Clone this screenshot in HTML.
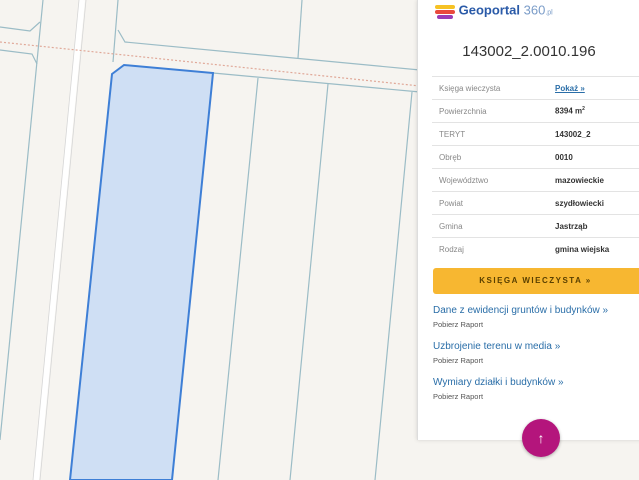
<!DOCTYPE html>
<html><head><meta charset="utf-8"><style>
body{margin:0;width:639px;height:480px;overflow:hidden;background:#f6f4f0;font-family:"Liberation Sans",sans-serif;position:relative}
svg{position:absolute;left:0;top:0}
.panel{position:absolute;left:417px;top:0;width:230px;height:440px;background:#fff;border-left:1px solid #ddd;box-shadow:0 0 4px rgba(0,0,0,.15)}
.logo{position:absolute;left:17px;top:2px;font-size:13px;color:#2a5aa8;font-weight:bold}
.logo i{font-style:normal;font-weight:normal;color:#7a9cc8}
.title{position:absolute;left:0;width:222px;top:43px;text-align:center;font-size:15px;color:#333}
table{position:absolute;left:14px;top:76px;width:210px;border-collapse:collapse;font-size:8px}
td{height:22px;border-top:1px solid #e3e3e3;color:#888;padding:0 0 0 7px;width:110px}
td+td{color:#333;font-weight:bold;padding-left:6px;width:auto}
.btn{position:absolute;left:15px;top:268px;width:215px;height:26px;background:#f7b731;border-radius:3px;color:#5a4000;font-size:8px;font-weight:bold;letter-spacing:1.5px;line-height:26px;text-align:center;padding-right:10px;box-sizing:border-box}
.l{position:absolute;left:15px;font-size:10px;color:#2a6ea8}
.s{position:absolute;left:15px;font-size:7.5px;color:#555}
.fab{position:absolute;left:522px;top:419px;width:38px;height:38px;border-radius:50%;background:#b4157c;color:#fff;text-align:center;line-height:38px;font-size:14px;box-shadow:0 1px 3px rgba(0,0,0,.3)}
</style></head><body>
<svg width="639" height="480" fill="none" stroke="#9bbcc6" stroke-width="1.2">
<path d="M82 0 L36 480" stroke="#fff" stroke-width="6"/>
<path d="M79 0 L33 480M86 0L40 480" stroke="#d6d6d6" stroke-width=".8"/>
<path d="M43 0 L0 440"/>
<path d="M118 0 L113 62"/>
<path d="M0 27 L30 31 L40 22M0 50 L32 54 L37 64"/>
<path d="M118 30 L125 42 L420 70"/>
<path d="M213 73 L420 92"/>
<path d="M302 0 L298 58"/>
<path d="M258 78 L218 480M328 84 L290 480M412 92 L375 480"/>
<path d="M0 42 L420 86" stroke="#e0a898" stroke-dasharray="2 2"/>
<path d="M112 74 L124 65 L213 73 L172 480 L70 480 Z" fill="#cfdff4" stroke="#3e7fd6" stroke-width="2"/>
</svg>
<div class="panel">
<div class="logo"><svg width="20" height="18" style="position:static;vertical-align:middle"><rect x="0" y="3" width="20" height="4" rx="2" fill="#f6c224"/><rect x="0" y="8" width="20" height="4" rx="2" fill="#e9493c"/><rect x="2" y="13" width="16" height="4" rx="2" fill="#9a3db6"/></svg> Geoportal <i>360</i><small style="font-size:7px;color:#7a9cc8;font-weight:normal">.pl</small></div>
<div class="title">143002_2.0010.196</div>
<table>
<tr><td>Księga wieczysta</td><td style="color:#2a6ea8;text-decoration:underline">Pokaż »</td></tr>
<tr><td>Powierzchnia</td><td>8394 m<sup style="font-size:5px">2</sup></td></tr>
<tr><td>TERYT</td><td>143002_2</td></tr>
<tr><td>Obręb</td><td>0010</td></tr>
<tr><td>Województwo</td><td>mazowieckie</td></tr>
<tr><td>Powiat</td><td>szydłowiecki</td></tr>
<tr><td>Gmina</td><td>Jastrząb</td></tr>
<tr><td>Rodzaj</td><td>gmina wiejska</td></tr>
</table>
<div class="btn">KSIĘGA WIECZYSTA »</div>
<div class="l" style="top:305px">Dane z ewidencji gruntów i budynków »</div>
<div class="s" style="top:320px">Pobierz Raport</div>
<div class="l" style="top:341px">Uzbrojenie terenu w media »</div>
<div class="s" style="top:356px">Pobierz Raport</div>
<div class="l" style="top:377px">Wymiary działki i budynków »</div>
<div class="s" style="top:392px">Pobierz Raport</div>
</div>
<div class="fab">↑</div>
</body></html>
